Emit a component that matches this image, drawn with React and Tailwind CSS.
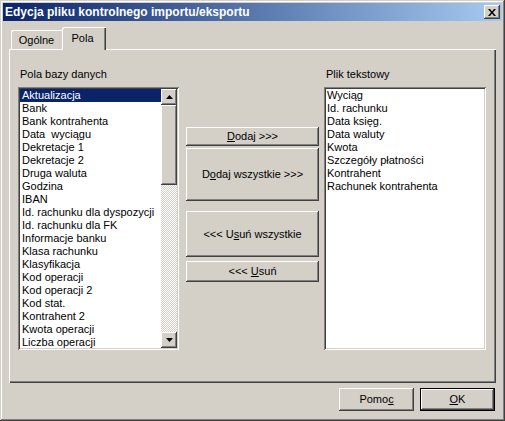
import React from "react";

const raised =
  "shadow-[inset_-1px_-1px_0_#404040,inset_1px_1px_0_#fff,inset_-2px_-2px_0_#808080,inset_2px_2px_0_#d4d0c8]";
const sunken =
  "shadow-[inset_1px_1px_0_#808080,inset_-1px_-1px_0_#fff,inset_2px_2px_0_#404040,inset_-2px_-2px_0_#d4d0c8]";

const dbFields = [
  "Aktualizacja",
  "Bank",
  "Bank kontrahenta",
  "Data  wyciągu",
  "Dekretacje 1",
  "Dekretacje 2",
  "Druga waluta",
  "Godzina",
  "IBAN",
  "Id. rachunku dla dyspozycji",
  "Id. rachunku dla FK",
  "Informacje banku",
  "Klasa rachunku",
  "Klasyfikacja",
  "Kod operacji",
  "Kod operacji 2",
  "Kod stat.",
  "Kontrahent 2",
  "Kwota operacji",
  "Liczba operacji",
];

const fileFields = [
  "Wyciąg",
  "Id. rachunku",
  "Data księg.",
  "Data waluty",
  "Kwota",
  "Szczegóły płatności",
  "Kontrahent",
  "Rachunek kontrahenta",
];

function Arrow({ down }) {
  return (
    <svg width="7" height="4" viewBox="0 0 7 4">
      {down ? <path d="M0 0H7L3.5 4Z" fill="#000" /> : <path d="M0 4H7L3.5 0Z" fill="#000" />}
    </svg>
  );
}

function Btn({ className = "", children }) {
  return (
    <div className={`flex items-center justify-center bg-[#d4d0c8] text-black ${raised} ${className}`}>
      <span className="leading-[13px] whitespace-pre">{children}</span>
    </div>
  );
}

export default function App() {
  return (
    <div
      className={`w-[505px] h-[421px] bg-[#d4d0c8] p-[3px] flex flex-col text-[11px] text-black shadow-[inset_-1px_-1px_0_#404040,inset_1px_1px_0_#d4d0c8,inset_-2px_-2px_0_#808080,inset_2px_2px_0_#fff]`}
      style={{ fontFamily: '"Liberation Sans", Arial, sans-serif' }}
    >
      {/* Title bar */}
      <div className="h-[18px] flex items-center justify-between pl-[2px] pr-[2px] bg-[linear-gradient(to_right,#0a246a,#a6caf0)]">
        <span className="text-white font-bold text-[12px] leading-[14px]">
          Edycja pliku kontrolnego importu/eksportu
        </span>
        <div className={`w-[16px] h-[14px] bg-[#d4d0c8] flex items-center justify-center ${raised}`}>
          <svg width="8" height="7" viewBox="0 0 8 7">
            <path d="M0 0h2l2 2.5L6 0h2L5 3.5 8 7H6L4 4.5 2 7H0l3-3.5Z" fill="#000" />
          </svg>
        </div>
      </div>

      {/* Tabs */}
      <div className="mx-[6px] mt-[6px] h-[22px] flex items-end">
        <div className="ml-[2px] w-[51px] h-[19px] rounded-tl-[2px] shadow-[inset_1px_1px_0_#fff] flex items-center justify-center pt-[1px]">
          <span className="leading-[13px]">Ogólne</span>
        </div>
        <div className="relative z-10 w-[44px] h-[23px] -mb-[1px] bg-[#d4d0c8] rounded-tl-[2px] shadow-[inset_1px_1px_0_#fff,inset_-1px_0_0_#404040,inset_-2px_0_0_#808080] flex items-start justify-center pt-[5px] pr-[3px]">
          <span className="leading-[13px]">Pola</span>
        </div>
      </div>

      {/* Panel */}
      <div className="mx-[6px] h-[334px] pt-[19px] pl-[9px] flex shadow-[inset_1px_1px_0_#fff,inset_-1px_-1px_0_#404040,inset_-2px_-2px_0_#808080]">
        {/* Left column */}
        <div className="w-[161px] flex flex-col">
          <div className="leading-[13px] pl-[2px] h-[13px]">Pola bazy danych</div>
          <div className={`mt-[6px] h-[263px] bg-white p-[2px] flex ${sunken}`}>
            <div className="flex-1 overflow-hidden">
              {dbFields.map((f, i) => (
                <div
                  key={f}
                  className={`h-[13px] leading-[13px] pl-[2px] whitespace-pre ${
                    i === 0 ? "bg-[#0a246a] text-white" : ""
                  }`}
                >
                  {f}
                </div>
              ))}
            </div>
            <div className="w-[16px] flex flex-col bg-[repeating-conic-gradient(#d4d0c8_0_25%,#fff_0_50%)] bg-[length:2px_2px]">
              <div className={`h-[16px] bg-[#d4d0c8] flex items-center justify-center ${raised}`}>
                <Arrow />
              </div>
              <div className={`h-[80px] bg-[#d4d0c8] ${raised}`} />
              <div className="flex-1" />
              <div className={`h-[16px] bg-[#d4d0c8] flex items-center justify-center ${raised}`}>
                <Arrow down />
              </div>
            </div>
          </div>
        </div>

        {/* Middle buttons */}
        <div className="ml-[7px] w-[133px] pt-[59px] flex flex-col">
          <Btn className="h-[19px]">
            <span className="underline">D</span>odaj &gt;&gt;&gt;
          </Btn>
          <Btn className="h-[53px] mt-[2px]">
            D<span className="underline">o</span>daj wszystkie &gt;&gt;&gt;
          </Btn>
          <Btn className="h-[46px] mt-[10px]">
            &lt;&lt;&lt; U<span className="underline">s</span>uń wszystkie
          </Btn>
          <Btn className="h-[21px] mt-[4px]">
            &lt;&lt;&lt; <span className="underline">U</span>suń
          </Btn>
        </div>

        {/* Right column */}
        <div className="ml-[5px] w-[162px] flex flex-col">
          <div className="leading-[13px] pl-[2px] h-[13px]">Plik tekstowy</div>
          <div className={`mt-[6px] h-[263px] bg-white p-[2px] ${sunken}`}>
            {fileFields.map((f) => (
              <div key={f} className="h-[13px] leading-[13px] pl-[1px] whitespace-pre">
                {f}
              </div>
            ))}
          </div>
        </div>
      </div>

      {/* Bottom buttons */}
      <div className="mt-[5px] pr-[7px] flex justify-end gap-[6px]">
        <Btn className="w-[75px] h-[23px]">
          Pomo<span className="underline">c</span>
        </Btn>
        <div className="w-[75px] h-[23px] border border-black">
          <Btn className="w-full h-full">
            <span className="underline">O</span>K
          </Btn>
        </div>
      </div>
    </div>
  );
}
